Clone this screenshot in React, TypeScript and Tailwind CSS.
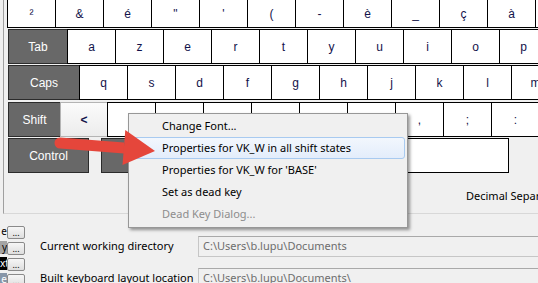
import React from 'react';
import clsx from 'clsx';

// the last cap of each row runs past the window edge, so it carries no label
const row1 = ['²', '&', 'é', '"', "'", '(', '-', 'è', '_', 'ç', 'à', ''];
const row2 = ['a', 'z', 'e', 'r', 't', 'y', 'u', 'i', 'o', 'p', ''];
const row3 = ['q', 's', 'd', 'f', 'g', 'h', 'j', 'k', 'l', 'm', ''];
// w x c v b n sit under the context menu, so their caps stay blank
const row4 = ['', '', '', '', '', '', ',', ';', ':', ''];

const menuItems = [
  { label: 'Change Font...' },
  { label: 'Properties for VK_W in all shift states', active: true },
  { label: "Properties for VK_W for 'BASE'" },
  { label: 'Set as dead key' },
  { label: 'Dead Key Dialog...', disabled: true },
];

// one key cap; keys overlap by 1px so neighbours share a border line
const Key: React.FC<{ label?: string; className?: string; mod?: boolean }> = ({ label, className, mod }) => (
  <div
    className={clsx(
      "flex shrink-0 items-center justify-center -mr-px border font-['Liberation_Sans',sans-serif] text-[12px]",
      mod ? 'bg-[#686868] border-[#2b2b2b] text-white' : 'bg-white border-black text-[#12124a]',
      className
    )}
  >
    {label}
  </div>
);

const DotsButton: React.FC = () => (
  <div className="mt-px flex h-[13px] w-[18px] shrink-0 items-end justify-center rounded-[2px] border border-[#8a8a8a] bg-gradient-to-b from-[#f6f6f6] to-[#dedede] pb-[1px] text-[9px] leading-[9px] text-black">
    ...
  </div>
);

const Arrow: React.FC = () => (
  <svg className="pointer-events-none absolute left-0 top-0" width="538" height="283" viewBox="0 0 538 283">
    <g fill="#e5463b">
      <path d="M60 137.5 L124 142.5 L124 153.5 L60 148.5 A5.5 5.5 0 0 1 60 137.5 Z" />
      <polygon points="125.3,130 155,151 122.5,165" />
    </g>
  </svg>
);

export default function App() {
  return (
    <div className="relative h-[283px] w-[538px] overflow-hidden bg-[#f0f0f0] font-['Noto_Sans',sans-serif]">
      {/* keyboard panel */}
      <div className="ml-[3px] flex h-[214px] flex-col border-b border-l border-[#a0a0a0] border-b-[#d8d8d8] pl-[3px]">
        <div className="flex">
          {row1.map((k, i) => (
            <Key key={i} label={k} className="h-[28px] w-[49px] border-t-0" />
          ))}
        </div>
        <div className="ml-px mt-px flex">
          <Key label="Tab" mod className="h-[35px] w-[60px]" />
          {row2.map((k, i) => (
            <Key key={i} label={k} className="h-[35px] w-[49px]" />
          ))}
        </div>
        <div className="ml-px mt-px flex">
          <Key label="Caps" mod className="h-[35px] w-[72px]" />
          {row3.map((k, i) => (
            <Key key={i} label={k} className="h-[35px] w-[49px]" />
          ))}
        </div>
        <div className="ml-px mt-[2px] flex">
          <Key label="Shift" mod className="h-[35px] w-[53px]" />
          <div className="mr-[-1px] flex h-[35px] w-[48px] shrink-0 items-center justify-center border border-[#b4b4b4] bg-gradient-to-b from-[#fbfbfb] to-[#ececec] font-['Liberation_Sans',sans-serif] text-[12px] font-bold text-[#12124a]">
            &lt;
          </div>
          {row4.map((k, i) => (
            <Key key={i} label={k} className="h-[35px] w-[49px]" />
          ))}
        </div>
        <div className="ml-px mt-px flex">
          <Key label="Control" mod className="mr-[12px] h-[35px] w-[81px]" />
          <Key mod className="h-[35px] w-[60px]" />
          <Key className="ml-[7px] h-[35px] w-[342px]" />
          <Key mod className="ml-[30px] h-[35px] w-[60px]" />
        </div>
        <div className="mt-[15px] whitespace-nowrap pl-[459px] text-[11px] leading-[16px] text-black">Decimal Separator</div>
      </div>

      {/* settings area */}
      <div className="flex">
        <div className="flex w-[25px] shrink-0 flex-col pt-[11px]">
          <div className="flex h-[16px]">
            <div className="h-[13px] w-[7px] overflow-hidden text-right text-[10px] leading-[13px] text-black">e</div>
            <DotsButton />
          </div>
          <div className="flex h-[16px]">
            <div className="h-[13px] w-[7px] overflow-hidden bg-[#a4a4a4] text-right text-[10px] leading-[13px] text-black">y</div>
            <DotsButton />
          </div>
          <div className="flex h-[16px]">
            <div className="h-[13px] w-[7px] overflow-hidden bg-black text-right text-[10px] leading-[13px] text-white">xt</div>
            <DotsButton />
          </div>
          <div className="flex h-[16px]">
            <div className="h-[13px] w-[7px] overflow-hidden bg-[#8796a8] text-right text-[10px] leading-[13px] text-white">e</div>
            <DotsButton />
          </div>
        </div>
        <div className="ml-[15px] flex flex-col pt-[22px]">
          <div className="flex h-[21px] items-center">
            <div className="w-[158px] shrink-0 whitespace-nowrap text-[11px] text-black">Current working directory</div>
            <div className="flex h-[21px] w-[380px] shrink-0 items-center border border-[#c6c6c6] border-t-[#a9a9a9] pl-[4px] text-[11px] text-[#6d6d6d]">
              C:\Users\b.lupu\Documents
            </div>
          </div>
          <div className="mt-[11px] flex h-[21px] items-center">
            <div className="w-[158px] shrink-0 whitespace-nowrap text-[11px] text-black">Built keyboard layout location</div>
            <div className="flex h-[21px] w-[380px] shrink-0 items-center border border-[#c6c6c6] border-t-[#a9a9a9] pl-[4px] text-[11px] text-[#6d6d6d]">
              C:\Users\b.lupu\Documents\
            </div>
          </div>
        </div>
      </div>

      {/* context menu */}
      <div className="absolute left-[128px] top-[113px] w-[280px] border border-[#979797] bg-[#f0f0f0] pb-[2px] pt-px shadow-[2px_2px_3px_rgba(0,0,0,0.4)]">
        {menuItems.map((item) => (
          <div
            key={item.label}
            className={clsx(
              'mx-[2px] flex h-[22px] items-center whitespace-nowrap rounded-[3px] border pl-[30px] text-[11px]',
              item.active ? 'border-[#a8caf0] bg-gradient-to-b from-[#f2f7fd] to-[#e3edfb]' : 'border-transparent',
              item.disabled ? 'text-[#8d8d8d]' : 'text-black'
            )}
          >
            {item.label}
          </div>
        ))}
      </div>

      <Arrow />
    </div>
  );
}
